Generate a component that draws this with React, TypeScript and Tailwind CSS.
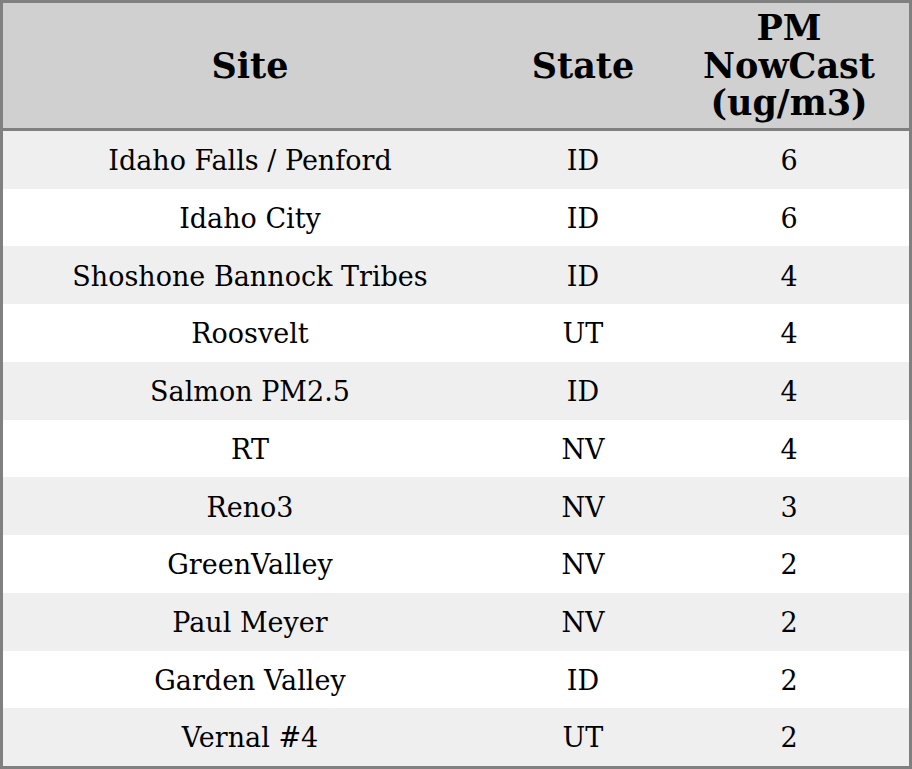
import React from 'react';

interface Row {
  site: string;
  state: string;
  pm: string;
}

const rows: Row[] = [
  { site: 'Idaho Falls / Penford', state: 'ID', pm: '6' },
  { site: 'Idaho City', state: 'ID', pm: '6' },
  { site: 'Shoshone Bannock Tribes', state: 'ID', pm: '4' },
  { site: 'Roosvelt', state: 'UT', pm: '4' },
  { site: 'Salmon PM2.5', state: 'ID', pm: '4' },
  { site: 'RT', state: 'NV', pm: '4' },
  { site: 'Reno3', state: 'NV', pm: '3' },
  { site: 'GreenValley', state: 'NV', pm: '2' },
  { site: 'Paul Meyer', state: 'NV', pm: '2' },
  { site: 'Garden Valley', state: 'ID', pm: '2' },
  { site: 'Vernal #4', state: 'UT', pm: '2' },
];

const App: React.FC = () => {
  return (
    <div
      className="w-[912px] h-[769px] bg-white text-black"
      style={{ fontFamily: '"DejaVu Serif", serif' }}
    >
      <div className="h-full flex flex-col border-[3px] border-[#808080]">
        {/* header */}
        <div className="h-[128px] shrink-0 flex items-center bg-[#d0d0d0] border-b-[3px] border-[#808080] font-bold text-[35px] leading-[37.5px]">
          <div className="w-[494px] text-center">Site</div>
          <div className="w-[172px] text-center">State</div>
          <div className="flex-1 text-center">PM<br />NowCast<br />(ug/m3)</div>
        </div>

        {/* rows */}
        <div className="flex-1 flex flex-col">
          {rows.map((r, i) => (
            <div
              key={r.site}
              className={`flex-1 flex items-center pt-[3px] text-[27px] ${i % 2 === 0 ? 'bg-[#efefef]' : 'bg-white'}`}
            >
              <div className="w-[494px] text-center">{r.site}</div>
              <div className="w-[172px] text-center">{r.state}</div>
              <div className="flex-1 text-center">{r.pm}</div>
            </div>
          ))}
        </div>
      </div>
    </div>
  );
};

export default App;
